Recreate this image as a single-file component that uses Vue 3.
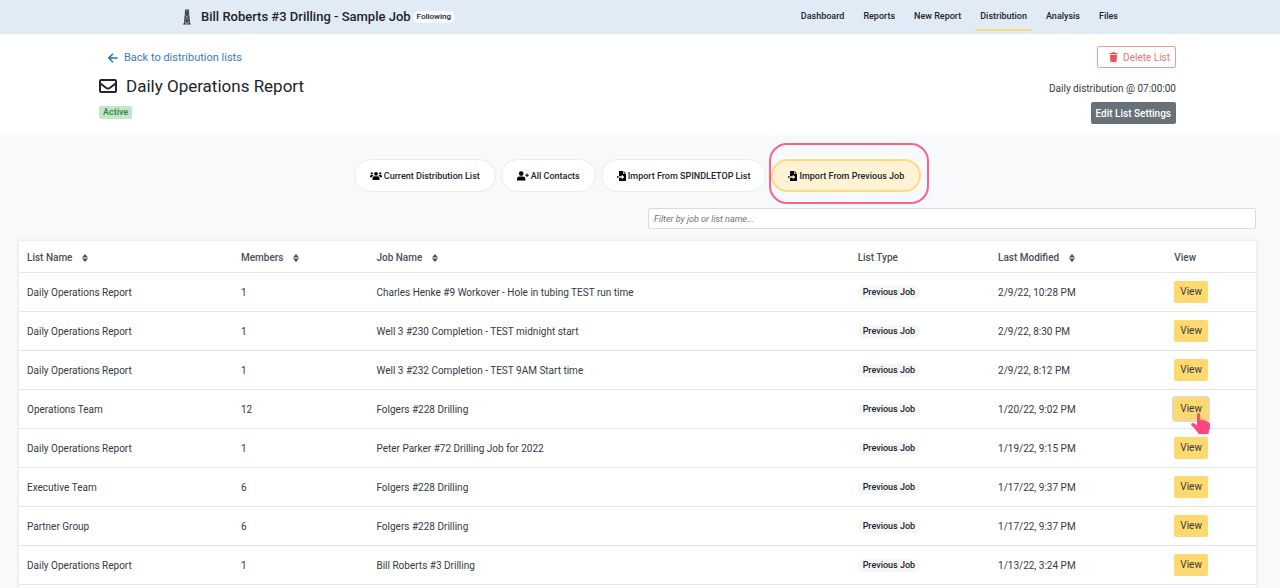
<script setup>
import { ref, computed } from 'vue'

const links = ['Dashboard', 'Reports', 'New Report', 'Distribution', 'Analysis', 'Files']
const tabs = [
  { label: 'Current Distribution List', icon: 'users' },
  { label: 'All Contacts', icon: 'plus' },
  { label: 'Import From SPINDLETOP List', icon: 'import' },
  { label: 'Import From Previous Job', icon: 'import' },
]
const active = ref(3)
const filter = ref('')
const columns = [
  { label: 'List Name', sort: true, cls: 'c-name' },
  { label: 'Members', sort: true, cls: 'c-members' },
  { label: 'Job Name', sort: true, cls: 'c-job' },
  { label: 'List Type', sort: false, cls: 'c-type' },
  { label: 'Last Modified', sort: true, cls: 'c-modified' },
  { label: 'View', sort: false, cls: 'c-view' },
]
const rows = [
  ['Daily Operations Report', 1, 'Charles Henke #9 Workover - Hole in tubing TEST run time', '2/9/22, 10:28 PM'],
  ['Daily Operations Report', 1, 'Well 3 #230 Completion - TEST midnight start', '2/9/22, 8:30 PM'],
  ['Daily Operations Report', 1, 'Well 3 #232 Completion - TEST 9AM Start time', '2/9/22, 8:12 PM'],
  ['Operations Team', 12, 'Folgers #228 Drilling', '1/20/22, 9:02 PM'],
  ['Daily Operations Report', 1, 'Peter Parker #72 Drilling Job for 2022', '1/19/22, 9:15 PM'],
  ['Executive Team', 6, 'Folgers #228 Drilling', '1/17/22, 9:37 PM'],
  ['Partner Group', 6, 'Folgers #228 Drilling', '1/17/22, 9:37 PM'],
  ['Daily Operations Report', 1, 'Bill Roberts #3 Drilling', '1/13/22, 3:24 PM'],
]
const focused = 3
const shown = computed(() => {
  const q = filter.value.toLowerCase()
  return rows.filter((r) => (r[0] + ' ' + r[2]).toLowerCase().includes(q))
})
</script>

<template>
  <div class="page">
    <header class="topbar">
      <div class="job">
        <svg class="rig" viewBox="0 0 8 16" aria-hidden="true">
          <path d="M2 1h4M2.600 1 1.500 15M5.400 1 6.500 15M2.300 4.500h3.400M2 8h4M1.500 11.500h5M2.500 2l3 2.500-3.600 3.500 4.300 3.500L1 15M5.500 2l-3 2.500L6.100 8l-4.300 3.500L7 15M0 15h8" />
          <path class="rig-core" d="M2 1h4v3.500H2zM1.500 8h5v3.500h-5z" />
        </svg>
        <span class="job-name">Bill Roberts #3 Drilling - Sample Job</span>
        <span class="following">Following</span>
      </div>
      <nav class="nav">
        <a v-for="l in links" :key="l" href="#" :class="{ current: l === 'Distribution' }">{{ l }}</a>
      </nav>
    </header>

    <section class="summary">
      <div class="summary-left">
        <a class="back" href="#">
          <svg class="arrow" viewBox="0 0 10 10" aria-hidden="true"><path d="M9.500 5H1M5 .8.800 5 5 9.200" /></svg>
          Back to distribution lists
        </a>
        <h1 class="title">
          <svg class="mail" viewBox="0 0 18 14" aria-hidden="true"><rect x="1" y="1" width="16" height="12" rx="1" /><path d="M1 4.200 7.300 9q1.700 1.200 3.400 0L17 4.200" /></svg>
          Daily Operations Report
        </h1>
        <span class="status">Active</span>
      </div>
      <div class="summary-right">
        <button class="delete" type="button">
          <svg class="trash" viewBox="0 0 10 11" aria-hidden="true"><path d="M.5 1h2.700l.5-.8h2.600l.5.800h2.700v1.200h-9zM1 3h8l-.5 7q-.1 1-1 1h-5q-.9 0-1-1z" /></svg>
          Delete List
        </button>
        <span class="schedule">Daily distribution @ 07:00:00</span>
        <button class="settings" type="button">Edit List Settings</button>
      </div>
    </section>

    <main class="content">
      <div class="tabs">
        <button v-for="(t, i) in tabs" :key="t.label" type="button" class="tab" :class="{ selected: i === active }" @click="active = i">
          <svg v-if="t.icon === 'users'" class="i-users" viewBox="0 0 12 10" aria-hidden="true">
            <circle cx="6" cy="2.800" r="1.900" /><circle cx="1.800" cy="2.400" r="1.100" /><circle cx="10.200" cy="2.400" r="1.100" />
            <path d="M2.500 9V7.500Q2.500 5.300 4.500 5.300h3q2 0 2 2.200V9zM0 6V5.200Q0 4 1.200 4h1.500q.6 0 .9.400Q2.200 5 2 6.200H0zM12 6V5.200Q12 4 10.800 4H9.300q-.6 0-.9.400Q9.800 5 10 6.200h2z" />
          </svg>
          <svg v-else-if="t.icon === 'plus'" class="i-users" viewBox="0 0 12 10" aria-hidden="true">
            <circle cx="4.200" cy="2.600" r="2.300" />
            <path d="M0 9.500V8q0-2.400 2.400-2.400H6q2.400 0 2.400 2.400v1.500zM9.500 2.600h1v1.200h1.300v1h-1.300V6h-1V4.800H8.300v-1h1.200z" />
          </svg>
          <svg v-else class="i-file" viewBox="0 0 9 10" aria-hidden="true">
            <path fill-rule="evenodd" d="M2 0h4v3h3v6.500q0 .5-.5.500h-6Q2 10 2 9.500V6.800h2.800v1.500L7.300 6 4.800 3.800v1.500H2zM6.600 0 9 2.400H6.600zM0 5.300h1.600v1.500H0z" />
          </svg>
          {{ t.label }}
        </button>
        <span class="callout" aria-hidden="true"></span>
      </div>

      <input v-model="filter" class="filter" type="text" aria-label="Filter by job or list name" placeholder="Filter by job or list name..." />

      <div class="card">
        <table>
          <thead>
            <tr>
              <th v-for="c in columns" :key="c.label" :class="c.cls" scope="col">
                {{ c.label }}
                <svg v-if="c.sort" class="sort" viewBox="0 0 6 8" aria-hidden="true"><path d="M3 0 6 3.400H0zM3 8 0 4.600h6z" /></svg>
              </th>
            </tr>
          </thead>
          <tbody>
            <tr v-for="(r, i) in shown" :key="i">
              <td>{{ r[0] }}</td>
              <td>{{ r[1] }}</td>
              <td>{{ r[2] }}</td>
              <td><span class="type">Previous Job</span></td>
              <td>{{ r[3] }}</td>
              <td class="view-cell">
                <span class="action">
                  <button type="button" class="view" :class="{ focused: r === rows[focused] }">View</button>
                  <svg v-if="r === rows[focused]" class="hand" viewBox="0 0 19 21" aria-hidden="true">
                    <path d="M6 1.800Q6 0 7.600 0 9.200 0 9.200 1.800V7q1.300-1 2.600.4 1.400-.8 2.500.7 1.500-.6 2.400.8Q19 8.700 19 11v3q0 1.500-.8 3-.5 1-.5 2.500V21H7.200v-1.500Q5 18 3.600 15.500L.4 12.200Q-.4 11 .8 10.300q1.200-.8 2.700.3L6 12.500z" />
                  </svg>
                </span>
              </td>
            </tr>
          </tbody>
        </table>
      </div>
    </main>
  </div>
</template>

<style>
body {
  margin: 0;
  background: #f8f9fb;
}
</style>

<style scoped>
.page {
  min-height: 100vh;
  display: flex;
  flex-direction: column;
  font-family: Roboto, "Liberation Sans", sans-serif;
  font-size: 10px;
  color: #343a40;
}
.page * {
  box-sizing: border-box;
}
button,
input {
  font-family: inherit;
  margin: 0;
}
svg {
  flex: none;
}
.topbar {
  display: flex;
  justify-content: space-between;
  height: 34px;
  padding: 0 157px 0 183px;
  background: #e1ebf6;
}
.job {
  display: flex;
  align-items: center;
  height: 33px;
}
.rig {
  width: 8px;
  height: 16px;
  fill: none;
  stroke: #3c4248;
  stroke-width: 1;
}
.rig-core {
  fill: #3c4248;
  fill-opacity: 0.4;
  stroke: none;
}
.job-name {
  margin-left: 10px;
  font-size: 13px;
  font-weight: 500;
  color: #212529;
}
.following {
  margin-left: 2px;
  padding: 0 4px;
  border-radius: 6px;
  background: #f8f9fa;
  font-size: 8px;
  font-weight: 500;
  line-height: 12px;
  color: #212529;
}
.nav {
  display: flex;
  gap: 9px;
  height: 31px;
}
.nav a {
  padding: 0 5px;
  font-size: 9px;
  line-height: 32px;
  font-weight: 500;
  color: #212529;
  text-decoration: none;
  border-bottom: 2px solid transparent;
}
.nav a.current {
  border-bottom-color: #ffdb7a;
}
.summary {
  display: flex;
  justify-content: space-between;
  height: 101px;
  padding: 12px 104px 0 99px;
  background: #fff;
}
.summary-left {
  display: flex;
  flex-direction: column;
  align-items: flex-start;
}
.back {
  display: flex;
  align-items: center;
  gap: 6px;
  margin-left: 9px;
  font-size: 11px;
  line-height: 24px;
  color: #3b7abf;
  text-decoration: none;
}
.arrow {
  width: 10px;
  height: 10px;
  fill: none;
  stroke: #1f6fb8;
  stroke-width: 1.500;
}
.title {
  display: flex;
  align-items: center;
  gap: 9px;
  margin: 5px 0 0;
  font-size: 17px;
  line-height: 22px;
  font-weight: 400;
  color: #212529;
}
.mail {
  width: 18px;
  height: 14px;
  fill: none;
  stroke: #212529;
  stroke-width: 2;
}
.status {
  margin-top: 9px;
  padding: 0 4px;
  border-radius: 2px;
  background: #c3e6c8;
  font-size: 9px;
  font-weight: 500;
  line-height: 13px;
  color: #2f8540;
}
.summary-right {
  display: flex;
  flex-direction: column;
  align-items: flex-end;
}
.delete {
  display: flex;
  align-items: center;
  gap: 5px;
  height: 22px;
  padding: 0 5px 0 11px;
  border: 1px solid #f29a9f;
  border-radius: 2px;
  background: #fff;
  font-size: 10px;
  color: #ef7379;
}
.trash {
  width: 9px;
  height: 10px;
  fill: #f0525b;
}
.schedule {
  margin: 13px 0 5px;
  font-size: 10px;
  line-height: 16px;
}
.settings {
  height: 22px;
  padding: 0 5px;
  border: 0;
  border-radius: 2px;
  background: #687178;
  font-size: 10px;
  font-weight: 500;
  color: #fff;
}
.content {
  flex: 1;
  display: flex;
  flex-direction: column;
  padding: 24px 24px 0 19px;
}
.tabs {
  position: relative;
  display: flex;
  justify-content: center;
  align-self: center;
  gap: 5px;
}
.tab {
  display: flex;
  align-items: center;
  gap: 2px;
  height: 33px;
  padding: 0 15px;
  border: 1px solid #e9ebed;
  border-radius: 17px;
  background: #fff;
  font-size: 9px;
  font-weight: 500;
  color: #212529;
}
.tab.selected {
  border: 2px solid #fddb7f;
  background: #fff3d6;
}
.i-users {
  width: 12px;
  height: 10px;
}
.i-file {
  width: 9px;
  height: 10px;
}
.callout {
  position: absolute;
  top: -16px;
  right: -8px;
  width: 160px;
  height: 61px;
  border: 2px solid #f9648b;
  border-radius: 18px;
  pointer-events: none;
}
.filter {
  align-self: flex-end;
  width: 49.15%;
  height: 21px;
  margin-top: 16px;
  padding: 0 5px;
  border: 1px solid #d8dcdf;
  border-radius: 2px;
  background: #fff;
  font-size: 9px;
}
.filter::placeholder {
  font-style: italic;
  color: #6c757d;
}
.card {
  flex: 1;
  margin-top: 12px;
  background: #fff;
  box-shadow: 0 0 4px rgba(60, 80, 100, 0.16);
}
table {
  width: 100%;
  table-layout: fixed;
  border-collapse: collapse;
}
th,
td {
  padding: 2px 8px 0;
  text-align: left;
  border-bottom: 1px solid #e4e6e9;
}
th {
  height: 31px;
  font-weight: 500;
  color: #495057;
}
td {
  height: 39px;
}
.view-cell {
  padding-top: 0;
}
.c-name {
  width: 17.3%;
}
.c-members {
  width: 10.95%;
}
.c-job {
  width: 38.9%;
}
.c-type {
  width: 11.35%;
}
.c-modified {
  width: 14.25%;
}
.sort {
  width: 6px;
  height: 8px;
  margin-left: 7px;
  vertical-align: -1px;
  fill: #495057;
}
.type {
  display: inline-block;
  padding: 0 5px;
  border-radius: 6px;
  background: #f5f6f7;
  font-size: 9px;
  font-weight: 500;
  line-height: 13px;
  color: #212529;
}
.action {
  position: relative;
  display: inline-block;
}
.view {
  display: block;
  height: 22px;
  padding: 0 6px;
  border: 0;
  border-radius: 2px;
  background: #fed970;
  font-size: 10px;
  color: #343a40;
}
.view.focused {
  box-shadow: 0 0 0 2px #e6dcb4;
}
.hand {
  position: absolute;
  top: 15px;
  left: 17px;
  width: 19px;
  height: 21px;
  fill: #ff477e;
}
</style>
